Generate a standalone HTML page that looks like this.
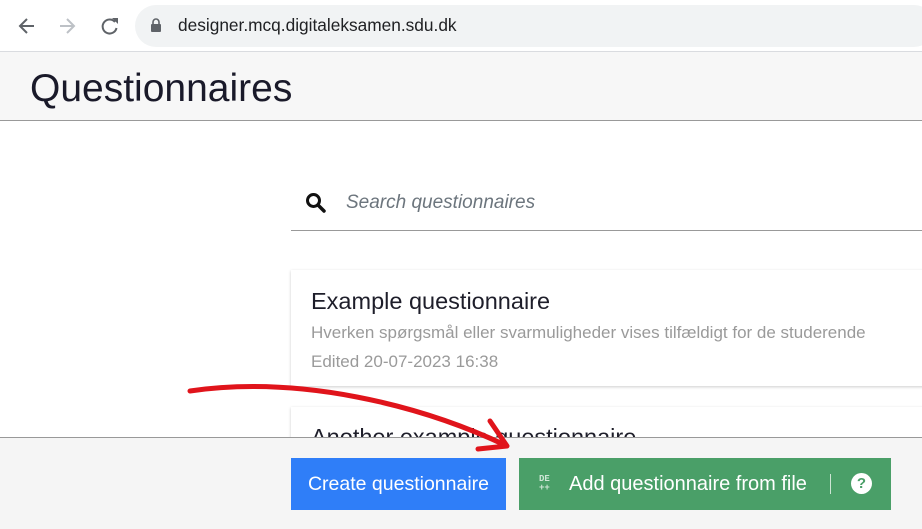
<!DOCTYPE html>
<html><head><style>
body{margin:0;width:922px;height:528px;overflow:hidden;position:relative;background:#fff;font-family:"Liberation Sans",sans-serif;}
.abs{position:absolute;white-space:nowrap}
</style></head><body>
<div class="abs" style="left:0;top:0;width:922px;height:51px;background:#fff;border-bottom:1px solid #dadce0"></div>
<svg class="abs" style="left:16px;top:14px" width="110" height="24" viewBox="0 0 110 24">
<path d="M18 12H5M11 5l-7 7 7 7" stroke="#5f6368" stroke-width="2" fill="none"/>
<path d="M44 12h13M51 5l7 7-7 7" stroke="#bdc1c6" stroke-width="2" fill="none"/>
<path d="M99 8a7 7 0 1 0 1.5 6" stroke="#5f6368" stroke-width="2" fill="none"/><path d="M96 4h6v6z" fill="#5f6368"/>
</svg>
<div class="abs" style="left:135px;top:5px;width:800px;height:42px;border-radius:21px;background:#f1f3f4"></div>
<svg class="abs" style="left:150px;top:18px" width="12" height="15"><rect x="1" y="6" width="10" height="8" rx="1" fill="#5f6368"/><path d="M3 6V4a3 3 0 0 1 6 0v2" stroke="#5f6368" stroke-width="1.6" fill="none"/></svg>
<div class="abs" style="left:178px;top:15px;font-size:17.3px;color:#202124">designer.mcq.digitaleksamen.sdu.dk</div>
<div class="abs" style="left:0;top:52px;width:922px;height:68px;background:#f7f7f7;border-bottom:1px solid #999"></div>
<div class="abs" style="left:30px;top:67px;font-size:39px;color:#1a1a2a">Questionnaires</div>
<svg class="abs" style="left:305px;top:192px" width="22" height="22"><circle cx="8.5" cy="8.5" r="6" stroke="#111" stroke-width="3" fill="none"/><path d="M13 13l6 6" stroke="#111" stroke-width="3.5" stroke-linecap="round"/></svg>
<div class="abs" style="left:346px;top:192px;font-size:19px;font-style:italic;color:#6c757d">Search questionnaires</div>
<div class="abs" style="left:291px;top:230px;width:631px;height:1px;background:#999"></div>
<div class="abs" style="left:291px;top:270px;width:640px;height:116px;background:#fff;box-shadow:0 1px 3px rgba(0,0,0,.2)"></div>
<div class="abs" style="left:311px;top:288px;font-size:23.5px;color:#1e1e2a">Example questionnaire</div>
<div class="abs" style="left:311px;top:323px;font-size:17px;color:#9a9a9a">Hverken spørgsmål eller svarmuligheder vises tilfældigt for de studerende</div>
<div class="abs" style="left:311px;top:352px;font-size:17px;color:#9a9a9a">Edited 20-07-2023 16:38</div>
<div class="abs" style="left:291px;top:407px;width:640px;height:60px;background:#fff;box-shadow:0 1px 3px rgba(0,0,0,.2)"></div>
<div class="abs" style="left:311px;top:424px;font-size:23.5px;color:#1e1e2a">Another example questionnaire</div>
<div class="abs" style="left:0;top:437px;width:922px;height:91px;background:#f5f5f5;border-top:1px solid #999"></div>
<div class="abs" style="left:291px;top:458px;width:215px;height:52px;background:#2f7ef8;color:#fff;font-size:19.5px;line-height:52px;text-align:center">Create questionnaire</div>
<div class="abs" style="left:519px;top:458px;width:372px;height:52px;background:#4a9f68;color:#fff"></div>
<div class="abs" style="left:539px;top:475px;font-size:9px;line-height:9px;color:#cfe6d6;font-family:'Liberation Mono',monospace;font-weight:bold">DE<br>++</div>
<div class="abs" style="left:569px;top:473px;font-size:20px;color:#fff">Add questionnaire from file</div>
<div class="abs" style="left:830px;top:474px;width:1px;height:20px;background:#cde5d4"></div>
<div class="abs" style="left:851px;top:473px;width:21px;height:21px;border-radius:50%;background:#fff;color:#4a9f68;font-weight:bold;font-size:15px;line-height:21px;text-align:center">?</div>
<svg class="abs" style="left:0;top:0" width="922" height="528">
<path d="M190 391 C300 375 420 405 505 445" stroke="#e0141b" stroke-width="5" fill="none" stroke-linecap="round"/>
<path d="M490 421 L507 446 L478 449" stroke="#e0141b" stroke-width="5" fill="none" stroke-linecap="round" stroke-linejoin="round"/>
</svg>
</body></html>
